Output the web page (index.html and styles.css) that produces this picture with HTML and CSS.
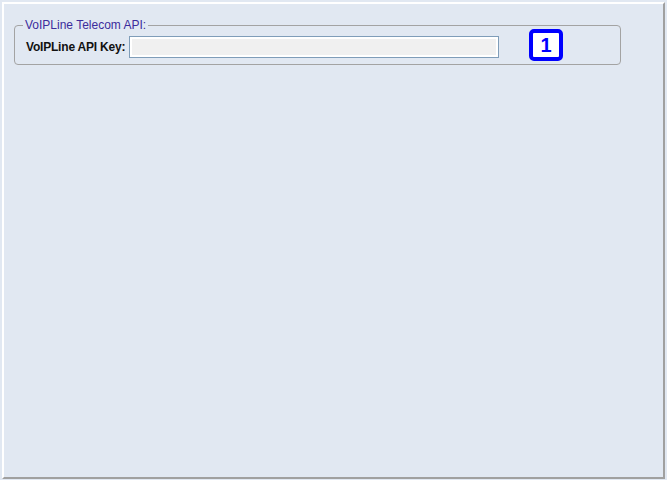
FILE: index.html
```html
<!DOCTYPE html>
<html>
<head>
<meta charset="utf-8">
<link rel="stylesheet" href="styles.css">
</head>
<body>
<div class="frame">
  <div class="group">
    <span class="legend">VoIPLine Telecom API:</span>
    <div class="row">
      <label class="label">VoIPLine API Key:</label>
      <div class="input"></div>
      <div class="badge">1</div>
    </div>
  </div>
</div>
</body>
</html>
```
FILE: styles.css
```css
html, body {
  margin: 0;
  padding: 0;
  background: #e1e8f2;
  font-family: "Liberation Sans", Arial, sans-serif;
  font-size: 12px;
}
.frame {
  box-sizing: border-box;
  margin: 2px 0 0 2px;
  width: 663px;
  height: 477px;
  border-top: 2px solid #ffffff;
  border-left: 2px solid #ffffff;
  border-right: 2px solid #a0a0a0;
  border-bottom: 2px solid #a0a0a0;
  padding-top: 21px;
  padding-left: 10px;
}
.group {
  position: relative;
  box-sizing: border-box;
  width: 607px;
  height: 40px;
  border: 1px solid #a3a3a3;
  border-radius: 4px;
  padding: 10px 0 0 11px;
}
.legend {
  position: absolute;
  top: -8px;
  left: 8px;
  padding: 0 2px 0 2px;
  background: #e1e8f2;
  color: #3c2c9c;
  line-height: 14px;
}
.row {
  display: flex;
  align-items: flex-start;
}
.label {
  font-weight: bold;
  color: #111111;
  line-height: 22px;
  width: 103px;
  letter-spacing: -0.2px;
  white-space: nowrap;
}
.input {
  box-sizing: border-box;
  width: 370px;
  height: 22px;
  border: 1px solid #7f9db9;
  background: #f0f0f0;
  box-shadow: inset 0 0 0 2px #ffffff;
}
.badge {
  box-sizing: border-box;
  margin: -7px 0 0 30px;
  width: 34px;
  height: 32px;
  border: 4px solid #0000ff;
  border-radius: 5px;
  background: #ffffff;
  color: #0000ff;
  font-weight: bold;
  font-size: 20px;
  line-height: 24px;
  text-align: center;
}
```
